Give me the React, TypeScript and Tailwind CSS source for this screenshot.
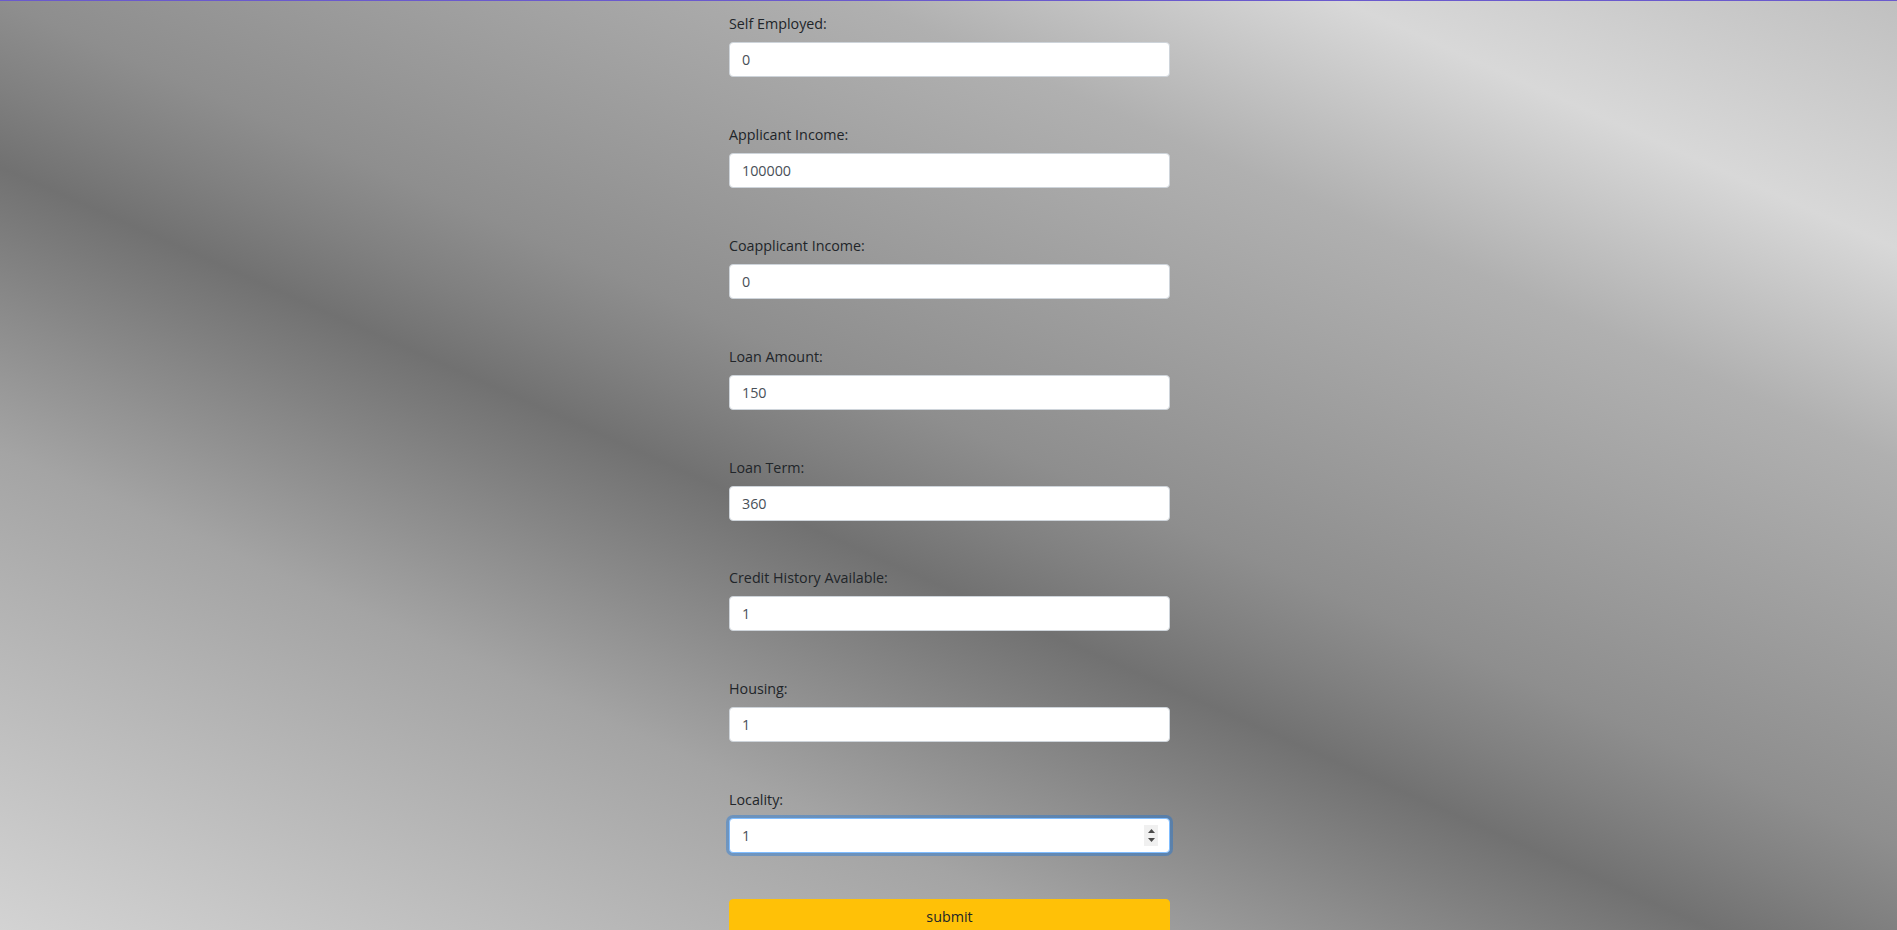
import React from 'react';

type Field = {
  label: string;
  value: string;
  focused?: boolean;
};

const fields: Field[] = [
  { label: 'Self Employed:', value: '0' },
  { label: 'Applicant Income:', value: '100000' },
  { label: 'Coapplicant Income:', value: '0' },
  { label: 'Loan Amount:', value: '150' },
  { label: 'Loan Term:', value: '360' },
  { label: 'Credit History Available:', value: '1' },
  { label: 'Housing:', value: '1' },
  { label: 'Locality:', value: '1', focused: true },
];

const Spinner: React.FC = () => (
  <div className="absolute right-[12px] top-[7px] flex h-[21px] w-[14px] flex-col items-center justify-center gap-[5px] bg-[#f0f0f0]">
    <svg width="7" height="4" viewBox="0 0 7 4">
      <path d="M3.5 0 L7 4 L0 4 Z" fill="#4a4a4a" />
    </svg>
    <svg width="7" height="4" viewBox="0 0 7 4">
      <path d="M0 0 L7 0 L3.5 4 Z" fill="#4a4a4a" />
    </svg>
  </div>
);

const FormField: React.FC<{ field: Field }> = ({ field }) => (
  <div className="flex flex-col">
    <label className="mb-2 block text-[14.3px] leading-[21px] text-[#212529]">{field.label}</label>
    <div className="relative">
      <input
        type="text"
        defaultValue={field.value}
        className={
          field.focused
            ? 'block h-[35px] w-full rounded-[4px] border border-[#80bdff] bg-white px-3 text-[14.3px] leading-[21px] text-[#495057] shadow-[0_0_0_3px_rgba(0,110,230,0.35)] outline-none'
            : 'block h-[35px] w-full rounded-[4px] border border-[#ced4da] bg-white px-3 text-[14.3px] leading-[21px] text-[#495057] outline-none'
        }
      />
      {field.focused && <Spinner />}
    </div>
  </div>
);

const App: React.FC = () => {
  return (
    <div
      className="min-h-screen border-t border-[#6a5acd] bg-fixed bg-[linear-gradient(24deg,#d3d3d3_0%,#a4a4a4_27%,#717171_43%,#808080_47.6%,#8e8e8e_52.4%,#b0b0b0_74%,#d8d8d8_86%,#c0c0c0_100%)] font-['Open_Sans','Segoe_UI',sans-serif]"
    >
      <form className="mx-auto flex w-[441px] translate-x-[1px] flex-col pt-3 pb-10" onSubmit={(e) => e.preventDefault()}>
        <div className="flex flex-col gap-[46.9px]">
          {fields.map((f) => (
            <FormField key={f.label} field={f} />
          ))}
        </div>
        <button
          type="submit"
          className="mt-[46px] h-[35px] w-full rounded-[4px] border border-[#ffc107] bg-[#ffc107] text-[14.3px] leading-[21px] text-[#212529]"
        >
          submit
        </button>
      </form>
    </div>
  );
};

export default App;
